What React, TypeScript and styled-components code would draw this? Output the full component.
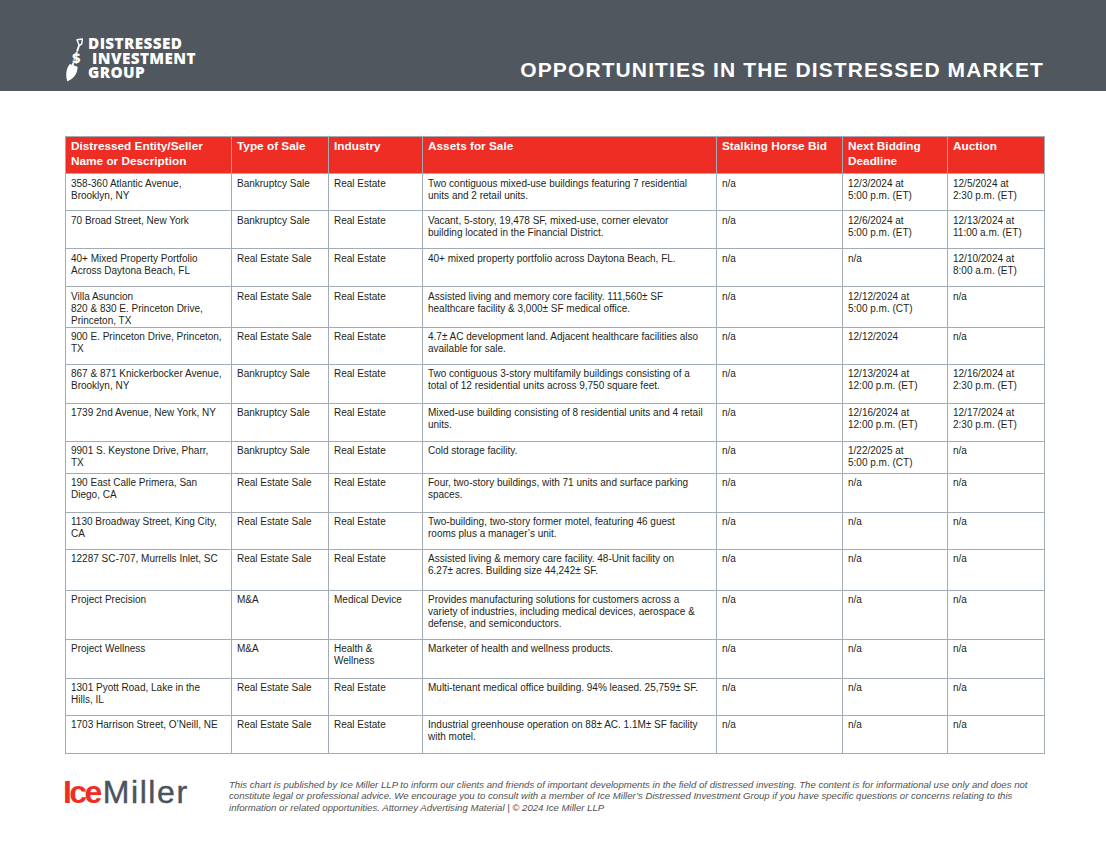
import React from "react";
import styled, { createGlobalStyle } from "styled-components";

const GlobalStyle = createGlobalStyle`
  html, body { margin: 0; padding: 0; background: #ffffff; }
  body { font-family: "Liberation Sans", Arial, sans-serif; color: #231f20; }
`;

const Page = styled.div`
  width: 1106px;
  min-height: 842px;
  background: #ffffff;
`;

const TopBar = styled.header`
  height: 91px;
  box-sizing: border-box;
  background: #50575e;
  display: flex;
  justify-content: space-between;
  align-items: flex-end;
  padding: 0 62px 11px 62px;
`;

const Logo = styled.div`
  display: flex;
  align-items: flex-start;
  gap: 4px;
  height: 44px;
`;

const LogoWords = styled.div`
  display: flex;
  flex-direction: column;
  font-family: "Open Sans", Lato, sans-serif;
  font-weight: 800;
  font-size: 15.3px;
  color: #ffffff;
  letter-spacing: 0.4px;
`;

const LogoLine = styled.span<{ $indent?: number }>`
  display: block;
  height: 14.5px;
  line-height: 14.5px;
  padding-left: ${(p) => p.$indent ?? 0}px;
  white-space: nowrap;
`;

const Title = styled.h1`
  margin: 0;
  font-family: "Liberation Sans", Arial, sans-serif;
  font-weight: 700;
  font-size: 21px;
  line-height: 21px;
  letter-spacing: 1.1px;
  color: #ffffff;
`;

const TableWrap = styled.div`
  margin: 45px 62px 0 65px;
`;

const Table = styled.table`
  width: 979px;
  border-collapse: collapse;
  table-layout: fixed;
  font-family: "Liberation Sans", Arial, sans-serif;
`;

const HeadCell = styled.th`
  background: #ee2d24;
  color: #ffffff;
  font-weight: 700;
  font-size: 11.8px;
  line-height: 15px;
  text-align: left;
  vertical-align: top;
  padding: 2px 5px 0 5px;
  border: 1px solid #a3abb5;
`;

const HeadRow = styled.tr`
  height: 37px;
`;

const BodyRow = styled.tr<{ $h: number }>`
  height: ${(p) => p.$h}px;
`;

const Cell = styled.td`
  font-size: 10px;
  line-height: 12px;
  color: #231f20;
  vertical-align: top;
  padding: 3.5px 5px 0 5px;
  border: 1px solid #a3abb5;
  white-space: pre-line;
`;

const Footer = styled.footer`
  display: grid;
  grid-template-columns: 166px 1fr;
  align-items: start;
  margin-top: 22px;
  padding: 0 20px 0 63px;
`;

const IceLogo = styled.div`
  font-family: "Liberation Sans", Arial, sans-serif;
  font-size: 32px;
  line-height: 32px;
  white-space: nowrap;
`;

const Ice = styled.span`
  color: #ee2d24;
  font-weight: 700;
  letter-spacing: -2.6px;
  margin-right: 3px;
`;

const Miller = styled.span`
  color: #4b535b;
  font-weight: 400;
  letter-spacing: 1.6px;
  -webkit-text-stroke: 0.4px #4b535b;
`;

const Disclaimer = styled.p`
  margin: 3px 0 0 0;
  font-family: "Liberation Sans", Arial, sans-serif;
  font-style: italic;
  font-size: 9.6px;
  line-height: 11.8px;
  color: #505050;
  white-space: nowrap;
`;

const columns: { label: string; width: number }[] = [
  { label: "Distressed Entity/Seller\nName or Description", width: 166 },
  { label: "Type of Sale", width: 97 },
  { label: "Industry", width: 94 },
  { label: "Assets for Sale", width: 294 },
  { label: "Stalking Horse Bid", width: 126 },
  { label: "Next Bidding\nDeadline", width: 105 },
  { label: "Auction", width: 97 },
];

type Row = { h: number; cells: string[] };

const rows: Row[] = [
  {
    h: 37,
    cells: [
      "358-360 Atlantic Avenue,\nBrooklyn, NY",
      "Bankruptcy Sale",
      "Real Estate",
      "Two contiguous mixed-use buildings featuring 7 residential\nunits and 2 retail units.",
      "n/a",
      "12/3/2024 at\n5:00 p.m. (ET)",
      "12/5/2024 at\n2:30 p.m. (ET)",
    ],
  },
  {
    h: 38,
    cells: [
      "70 Broad Street, New York",
      "Bankruptcy Sale",
      "Real Estate",
      "Vacant, 5-story, 19,478 SF, mixed-use, corner elevator\nbuilding located in the Financial District.",
      "n/a",
      "12/6/2024 at\n5:00 p.m. (ET)",
      "12/13/2024 at\n11:00 a.m. (ET)",
    ],
  },
  {
    h: 38,
    cells: [
      "40+ Mixed Property Portfolio\nAcross Daytona Beach, FL",
      "Real Estate Sale",
      "Real Estate",
      "40+ mixed property portfolio across Daytona Beach, FL.",
      "n/a",
      "n/a",
      "12/10/2024 at\n8:00 a.m. (ET)",
    ],
  },
  {
    h: 40,
    cells: [
      "Villa Asuncion\n820 & 830 E. Princeton Drive,\nPrinceton, TX",
      "Real Estate Sale",
      "Real Estate",
      "Assisted living and memory core facility.  111,560\u00b1 SF\nhealthcare facility & 3,000\u00b1 SF medical office.",
      "n/a",
      "12/12/2024 at\n5:00 p.m. (CT)",
      "n/a",
    ],
  },
  {
    h: 37,
    cells: [
      "900 E. Princeton Drive, Princeton,\nTX",
      "Real Estate Sale",
      "Real Estate",
      "4.7\u00b1 AC development land. Adjacent healthcare facilities also\navailable for sale.",
      "n/a",
      "12/12/2024",
      "n/a",
    ],
  },
  {
    h: 39,
    cells: [
      "867 & 871 Knickerbocker Avenue,\nBrooklyn, NY",
      "Bankruptcy Sale",
      "Real Estate",
      "Two contiguous 3-story multifamily buildings consisting of a\ntotal of 12 residential units across 9,750 square feet.",
      "n/a",
      "12/13/2024 at\n12:00 p.m. (ET)",
      "12/16/2024 at\n2:30 p.m. (ET)",
    ],
  },
  {
    h: 38,
    cells: [
      "1739 2nd Avenue, New York, NY",
      "Bankruptcy Sale",
      "Real Estate",
      "Mixed-use building consisting of 8 residential units and 4 retail\nunits.",
      "n/a",
      "12/16/2024 at\n12:00 p.m. (ET)",
      "12/17/2024 at\n2:30 p.m. (ET)",
    ],
  },
  {
    h: 32,
    cells: [
      "9901 S. Keystone Drive, Pharr,\nTX",
      "Bankruptcy Sale",
      "Real Estate",
      "Cold storage facility.",
      "n/a",
      "1/22/2025 at\n5:00 p.m. (CT)",
      "n/a",
    ],
  },
  {
    h: 39,
    cells: [
      "190 East Calle Primera, San\nDiego, CA",
      "Real Estate Sale",
      "Real Estate",
      "Four, two-story buildings, with 71 units and surface parking\nspaces.",
      "n/a",
      "n/a",
      "n/a",
    ],
  },
  {
    h: 37,
    cells: [
      "1130 Broadway Street, King City,\nCA",
      "Real Estate Sale",
      "Real Estate",
      "Two-building, two-story former motel, featuring 46 guest\nrooms plus a manager\u2019s unit.",
      "n/a",
      "n/a",
      "n/a",
    ],
  },
  {
    h: 41,
    cells: [
      "12287 SC-707, Murrells Inlet, SC",
      "Real Estate Sale",
      "Real Estate",
      "Assisted living & memory care facility.  48-Unit facility on\n6.27\u00b1 acres. Building size 44,242\u00b1 SF.",
      "n/a",
      "n/a",
      "n/a",
    ],
  },
  {
    h: 49,
    cells: [
      "Project Precision",
      "M&A",
      "Medical Device",
      "Provides manufacturing solutions for customers across a\nvariety of industries, including medical devices, aerospace &\ndefense, and semiconductors.",
      "n/a",
      "n/a",
      "n/a",
    ],
  },
  {
    h: 39,
    cells: [
      "Project Wellness",
      "M&A",
      "Health &\nWellness",
      "Marketer of health and wellness products.",
      "n/a",
      "n/a",
      "n/a",
    ],
  },
  {
    h: 37,
    cells: [
      "1301 Pyott Road, Lake in the\nHills, IL",
      "Real Estate Sale",
      "Real Estate",
      "Multi-tenant medical office building. 94% leased. 25,759\u00b1 SF.",
      "n/a",
      "n/a",
      "n/a",
    ],
  },
  {
    h: 38,
    cells: [
      "1703 Harrison Street, O\u2019Neill, NE",
      "Real Estate Sale",
      "Real Estate",
      "Industrial greenhouse operation on 88\u00b1 AC. 1.1M\u00b1 SF facility\nwith motel.",
      "n/a",
      "n/a",
      "n/a",
    ],
  },
];

const HeadText = styled.span`
  white-space: pre-line;
`;

function ShovelIcon() {
  return (
    <svg width="22" height="48" viewBox="0 0 22 48" aria-hidden="true">
      <path
        d="M15 3.8 L20.4 3 L19.8 7.8 L17.2 9.6 Z"
        fill="none"
        stroke="#ffffff"
        strokeWidth="1.4"
        strokeLinejoin="round"
      />
      <line x1="17" y1="9.5" x2="10.6" y2="29.5" stroke="#ffffff" strokeWidth="1.9" />
      <text
        x="14.2"
        y="26.8"
        textAnchor="middle"
        fontFamily="'Open Sans', sans-serif"
        fontWeight="800"
        fontSize="14"
        fill="#ffffff"
        stroke="#50575e"
        strokeWidth="0.9"
        paintOrder="stroke"
      >
        $
      </text>
      <path
        d="M7.8 28 L15.6 30.8 C15.6 36.8 12.4 42.4 5.4 45.4 C3.4 40.2 3.8 33 7.8 28 Z"
        fill="#ffffff"
      />
    </svg>
  );
}

export default function App() {
  return (
    <Page>
      <GlobalStyle />
      <TopBar>
        <Logo>
          <ShovelIcon />
          <LogoWords>
            <LogoLine>DISTRESSED</LogoLine>
            <LogoLine $indent={4}>INVESTMENT</LogoLine>
            <LogoLine>GROUP</LogoLine>
          </LogoWords>
        </Logo>
        <Title>OPPORTUNITIES IN THE DISTRESSED MARKET</Title>
      </TopBar>

      <TableWrap>
        <Table>
          <colgroup>
            {columns.map((c) => (
              <col key={c.label} style={{ width: c.width }} />
            ))}
          </colgroup>
          <thead>
            <HeadRow>
              {columns.map((c) => (
                <HeadCell key={c.label}>
                  <HeadText>{c.label}</HeadText>
                </HeadCell>
              ))}
            </HeadRow>
          </thead>
          <tbody>
            {rows.map((r, i) => (
              <BodyRow key={i} $h={r.h}>
                {r.cells.map((c, j) => (
                  <Cell key={j}>{c}</Cell>
                ))}
              </BodyRow>
            ))}
          </tbody>
        </Table>
      </TableWrap>

      <Footer>
        <IceLogo>
          <Ice>Ice</Ice>
          <Miller>Miller</Miller>
        </IceLogo>
        <Disclaimer>
          This chart is published by Ice Miller LLP to inform our clients and friends of important developments in the field of distressed investing. The content is for informational use only and does not
          <br />
          constitute legal or professional advice. We encourage you to consult with a member of Ice Miller’s Distressed Investment Group if you have specific questions or concerns relating to this
          <br />
          information or related opportunities. Attorney Advertising Material | © 2024 Ice Miller LLP
        </Disclaimer>
      </Footer>
    </Page>
  );
}
